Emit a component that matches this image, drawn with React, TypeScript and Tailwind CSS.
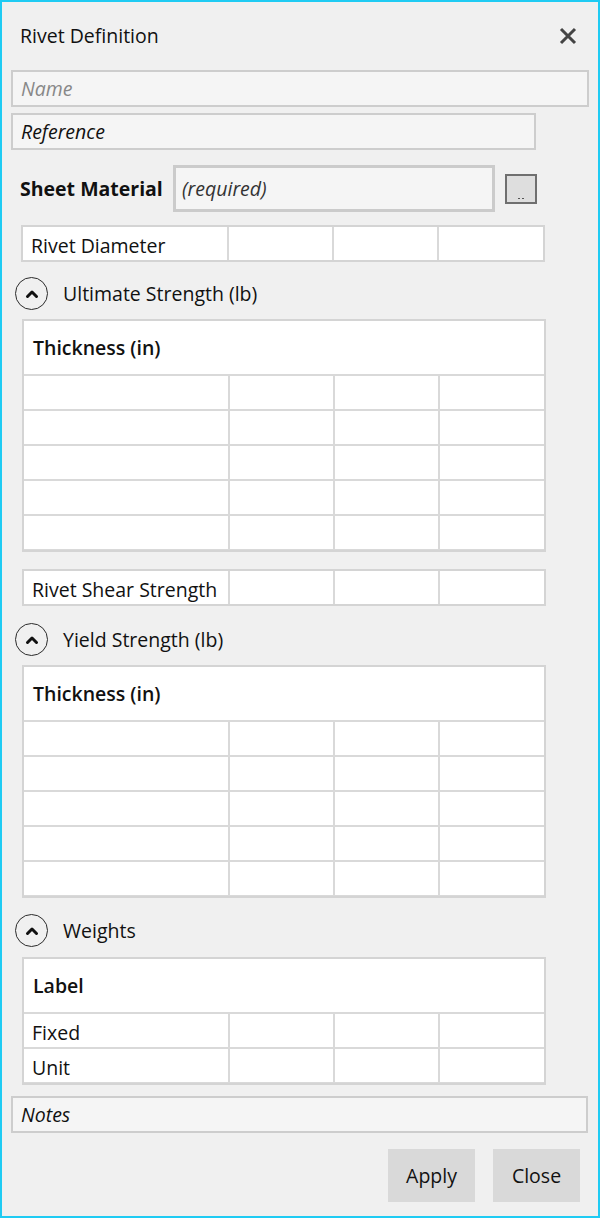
import React from "react";

const font = { fontFamily: '"Open Sans", "Noto Sans", sans-serif' };

function Chevron() {
  return (
    <div className="flex h-[33px] w-[33px] items-center justify-center rounded-full border-[1.5px] border-[#2b2b2b]">
      <svg width="14" height="10" viewBox="0 0 14 10">
        <path d="M2.5 7.5 L7 3 L11.5 7.5" fill="none" stroke="#111" strokeWidth="3" strokeLinecap="round" strokeLinejoin="round" />
      </svg>
    </div>
  );
}

function Section({ title, top }: { title: string; top: string }) {
  return (
    <div className={`flex items-center gap-[15px] pl-[13px] ${top}`}>
      <Chevron />
      <span className="text-[19.5px] text-[#111]">{title}</span>
    </div>
  );
}

function Row({ label, first = false }: { label?: string; first?: boolean }) {
  return (
    <div
      className={`grid grid-cols-[204px_103px_103px_104px] gap-x-[2px] bg-[#d9d9d9] pr-[2px] ${
        first ? "" : "border-t-2 border-[#d9d9d9]"
      }`}
    >
      <div className="flex h-[33px] items-end overflow-hidden whitespace-nowrap bg-white pl-[8px] text-[19.5px] leading-[28px] text-[#111]">
        {label}
      </div>
      <div className="bg-white" />
      <div className="bg-white" />
      <div className="bg-white" />
    </div>
  );
}

function Table({ header, rows, top }: { header: string; rows: string[]; top: string }) {
  return (
    <div className={`ml-[20px] w-[524px] border-2 border-[#d4d4d4] bg-white ${top}`}>
      <div className="flex h-[55px] items-center border-b-2 border-[#d9d9d9] pl-[9px] text-[19.5px] font-semibold text-[#111]">
        {header}
      </div>
      {rows.map((r, i) => (
        <Row key={i} label={r} first={i === 0} />
      ))}
      <div className="h-[1px] bg-[#d9d9d9]" />
    </div>
  );
}

export default function App() {
  return (
    <div style={font} className="flex h-[1218px] w-[600px] flex-col border-2 border-[#1fcbf3] bg-[#f0f0f0]">
      <div className="flex h-[68px] shrink-0 items-center justify-between pl-[18px] pr-[21px]">
        <span className="text-[19.5px] text-[#111]">Rivet Definition</span>
        <svg width="18" height="18" viewBox="0 0 18 18">
          <path d="M2 2 L16 16 M16 2 L2 16" stroke="#444" strokeWidth="3" />
        </svg>
      </div>

      <div className="ml-[9px] flex h-[37px] w-[578px] items-center border-2 border-[#cdcdcd] bg-[#f5f5f5] pl-[8px] text-[19.5px] italic text-[#888]">
        Name
      </div>
      <div className="ml-[9px] mt-[6px] flex h-[37px] w-[525px] items-center border-2 border-[#cdcdcd] bg-[#f5f5f5] pl-[8px] text-[19.5px] italic text-[#111]">
        Reference
      </div>

      <div className="mt-[15px] flex items-center">
        <span className="ml-[18px] w-[153px] whitespace-nowrap text-[19.5px] font-bold text-[#111]">
          Sheet Material
        </span>
        <div className="flex h-[47px] w-[322px] items-center border-[3px] border-[#cbcbcb] bg-[#f5f5f5] pl-[6px] text-[19.5px] italic text-[#333]">
          (required)
        </div>
        <div className="ml-[10px] flex h-[30px] w-[32px] items-end justify-center border-2 border-[#6f6f6f] bg-[#dedede] pb-[3px]">
          <div className="flex gap-[2px]">
            <div className="h-[1px] w-[2px] bg-[#555]" />
            <div className="h-[1px] w-[2px] bg-[#555]" />
          </div>
        </div>
      </div>

      <div className="ml-[19px] mt-[13px] w-[524px] border-2 border-[#d4d4d4] bg-white">
        <Row label="Rivet Diameter" first />
      </div>

      <Section title="Ultimate Strength (lb)" top="mt-[15px]" />
      <Table header="Thickness (in)" rows={["", "", "", "", ""]} top="mt-[9px]" />

      <div className="ml-[20px] mt-[17px] w-[524px] border-2 border-[#d4d4d4] bg-white">
        <Row label="Rivet Shear Strength" first />
      </div>

      <Section title="Yield Strength (lb)" top="mt-[17px]" />
      <Table header="Thickness (in)" rows={["", "", "", "", ""]} top="mt-[9px]" />

      <Section title="Weights" top="mt-[16px]" />
      <Table header="Label" rows={["Fixed", "Unit"]} top="mt-[10px]" />

      <div className="ml-[9px] mt-[11px] flex h-[37px] w-[577px] items-center border-2 border-[#cdcdcd] bg-[#f5f5f5] pl-[8px] text-[19.5px] italic text-[#111]">
        Notes
      </div>

      <div className="mt-[16px] flex justify-end gap-[18px] pr-[18px]">
        <button className="h-[53px] w-[87px] bg-[#d9d9d9] text-[19.5px] text-[#111]">Apply</button>
        <button className="h-[53px] w-[87px] bg-[#d9d9d9] text-[19.5px] text-[#111]">Close</button>
      </div>
    </div>
  );
}
